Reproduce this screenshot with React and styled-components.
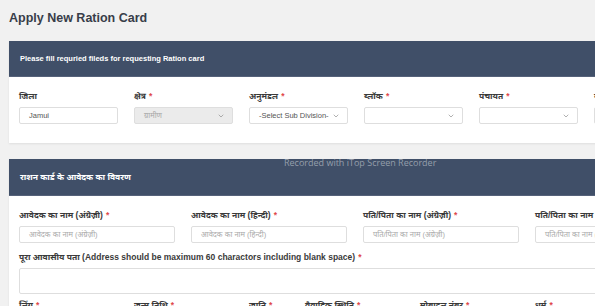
import React from 'react'
import styled, { createGlobalStyle } from 'styled-components'
import { ChevronDown } from 'lucide-react'

const GlobalStyle = createGlobalStyle`
  html, body {
    margin: 0;
    padding: 0;
    background: #ffffff;
    font-family: "Liberation Sans", "Noto Sans Devanagari", "Noto Sans", sans-serif;
  }
  * { box-sizing: border-box; }
`

const Page = styled.div`
  position: relative;
  width: 595px;
  height: 306px;
  overflow: hidden;
  background: #f1f1f1;
  padding: 10px 0 0 9px;
`

const Title = styled.h1`
  margin: 0 0 15px;
  font-size: 12.5px;
  line-height: 16px;
  font-weight: bold;
  color: #383d49;
`

const Card = styled.section`
  width: 700px;
  background: #ffffff;
  margin-bottom: 16px;
  box-shadow: 0 1px 2px rgba(0, 0, 0, 0.08);
`

const CardHeader = styled.div`
  height: ${p => p.$h}px;
  background: #404f68;
  color: #ffffff;
  font-size: ${p => p.$size}px;
  font-weight: bold;
  display: flex;
  align-items: center;
  padding-left: 11px;
  border-bottom: 1px solid #56627a;
`

const CardBody = styled.div`
  padding: 13px 10px ${p => p.$pb}px;
`

const Row = styled.div`
  display: flex;
  gap: 16px;
  margin-bottom: ${p => p.$mb || 0}px;
`

const Field = styled.div`
  width: ${p => p.$w}px;
  flex: none;
`

const Label = styled.div`
  font-size: 8.5px;
  line-height: 12px;
  font-weight: bold;
  color: #3a3a3a;
  white-space: nowrap;
  margin-bottom: 5px;
`

const Star = styled.span`
  color: #e0474a;
  margin-left: 3px;
`

const Input = styled.div`
  height: 17px;
  border: 1px solid #dedede;
  border-radius: 2px;
  background: ${p => (p.$disabled ? '#ebebeb' : '#ffffff')};
  color: ${p => (p.$muted ? '#a8a8a8' : '#555555')};
  font-size: 7.5px;
  display: flex;
  align-items: center;
  justify-content: space-between;
  padding: 0 7px 0 9px;
  white-space: nowrap;
  overflow: hidden;
`

const TextArea = styled.div`
  height: 26px;
  border: 1px solid #dedede;
  border-radius: 2px;
  background: #ffffff;
  margin-bottom: 5px;
`

const Watermark = styled.div`
  position: absolute;
  left: 284px;
  top: 156px;
  font-size: 9px;
  font-family: "Open Sans", "Liberation Sans", sans-serif;
  color: rgba(255, 255, 255, 0.45);
  white-space: nowrap;
`

const Select = ({ children, disabled, muted }) => (
  <Input $disabled={disabled} $muted={muted}>
    <span>{children}</span>
    <ChevronDown size={8} color="#8a8a8a" strokeWidth={2} />
  </Input>
)

const FieldLabel = ({ text, req }) => (
  <Label>
    {text}
    {req && <Star>*</Star>}
  </Label>
)

const firstRow = [
  { label: 'जिला', req: false, input: 'Jamui' },
  { label: 'क्षेत्र', req: true, select: 'ग्रामीण', disabled: true },
  { label: 'अनुमंडल', req: true, select: '-Select Sub Division-' },
  { label: 'ब्लॉक', req: true, select: '' },
  { label: 'पंचायत', req: true, select: '' },
  { label: 'गाँव', req: true, select: '' },
]

const nameRow = [
  'आवेदक का नाम (अंग्रेज़ी)',
  'आवेदक का नाम (हिन्दी)',
  'पति/पिता का नाम (अंग्रेज़ी)',
  'पति/पिता का नाम (हिन्दी)',
]

const lastRow = [
  { label: 'लिंग', w: 99 },
  { label: 'जन्म तिथि', w: 99 },
  { label: 'जाति', w: 40 },
  { label: 'वैवाहिक स्थिति', w: 99 },
  { label: 'मोबाइल नंबर', w: 99 },
  { label: 'धर्म', w: 99 },
]

const App = () => (
  <Page>
    <GlobalStyle />
    <Title>Apply New Ration Card</Title>

    <Card>
      <CardHeader $h={36} $size={7.5}>
        Please fill requried fileds for requesting Ration card
      </CardHeader>
      <CardBody $pb={19}>
        <Row>
          {firstRow.map(f => (
            <Field key={f.label} $w={99}>
              <FieldLabel text={f.label} req={f.req} />
              {f.input !== undefined ? (
                <Input>{f.input}</Input>
              ) : (
                <Select disabled={f.disabled} muted={f.disabled}>
                  {f.select}
                </Select>
              )}
            </Field>
          ))}
        </Row>
      </CardBody>
    </Card>

    <Card>
      <CardHeader $h={37} $size={8.5}>
        राशन कार्ड के आवेदक का विवरण
      </CardHeader>
      <CardBody $pb={10}>
        <Row $mb={8}>
          {nameRow.map(n => (
            <Field key={n} $w={156}>
              <FieldLabel text={n} req />
              <Input $muted>{n}</Input>
            </Field>
          ))}
        </Row>
        <FieldLabel
          text="पूरा आवासीय पता (Address should be maximum 60 charactors including blank space)"
          req
        />
        <TextArea />
        <Row>
          {lastRow.map(l => (
            <Field key={l.label} $w={l.w}>
              <FieldLabel text={l.label} req />
            </Field>
          ))}
        </Row>
      </CardBody>
    </Card>

    <Watermark>Recorded with iTop Screen Recorder</Watermark>
  </Page>
)

export default App
